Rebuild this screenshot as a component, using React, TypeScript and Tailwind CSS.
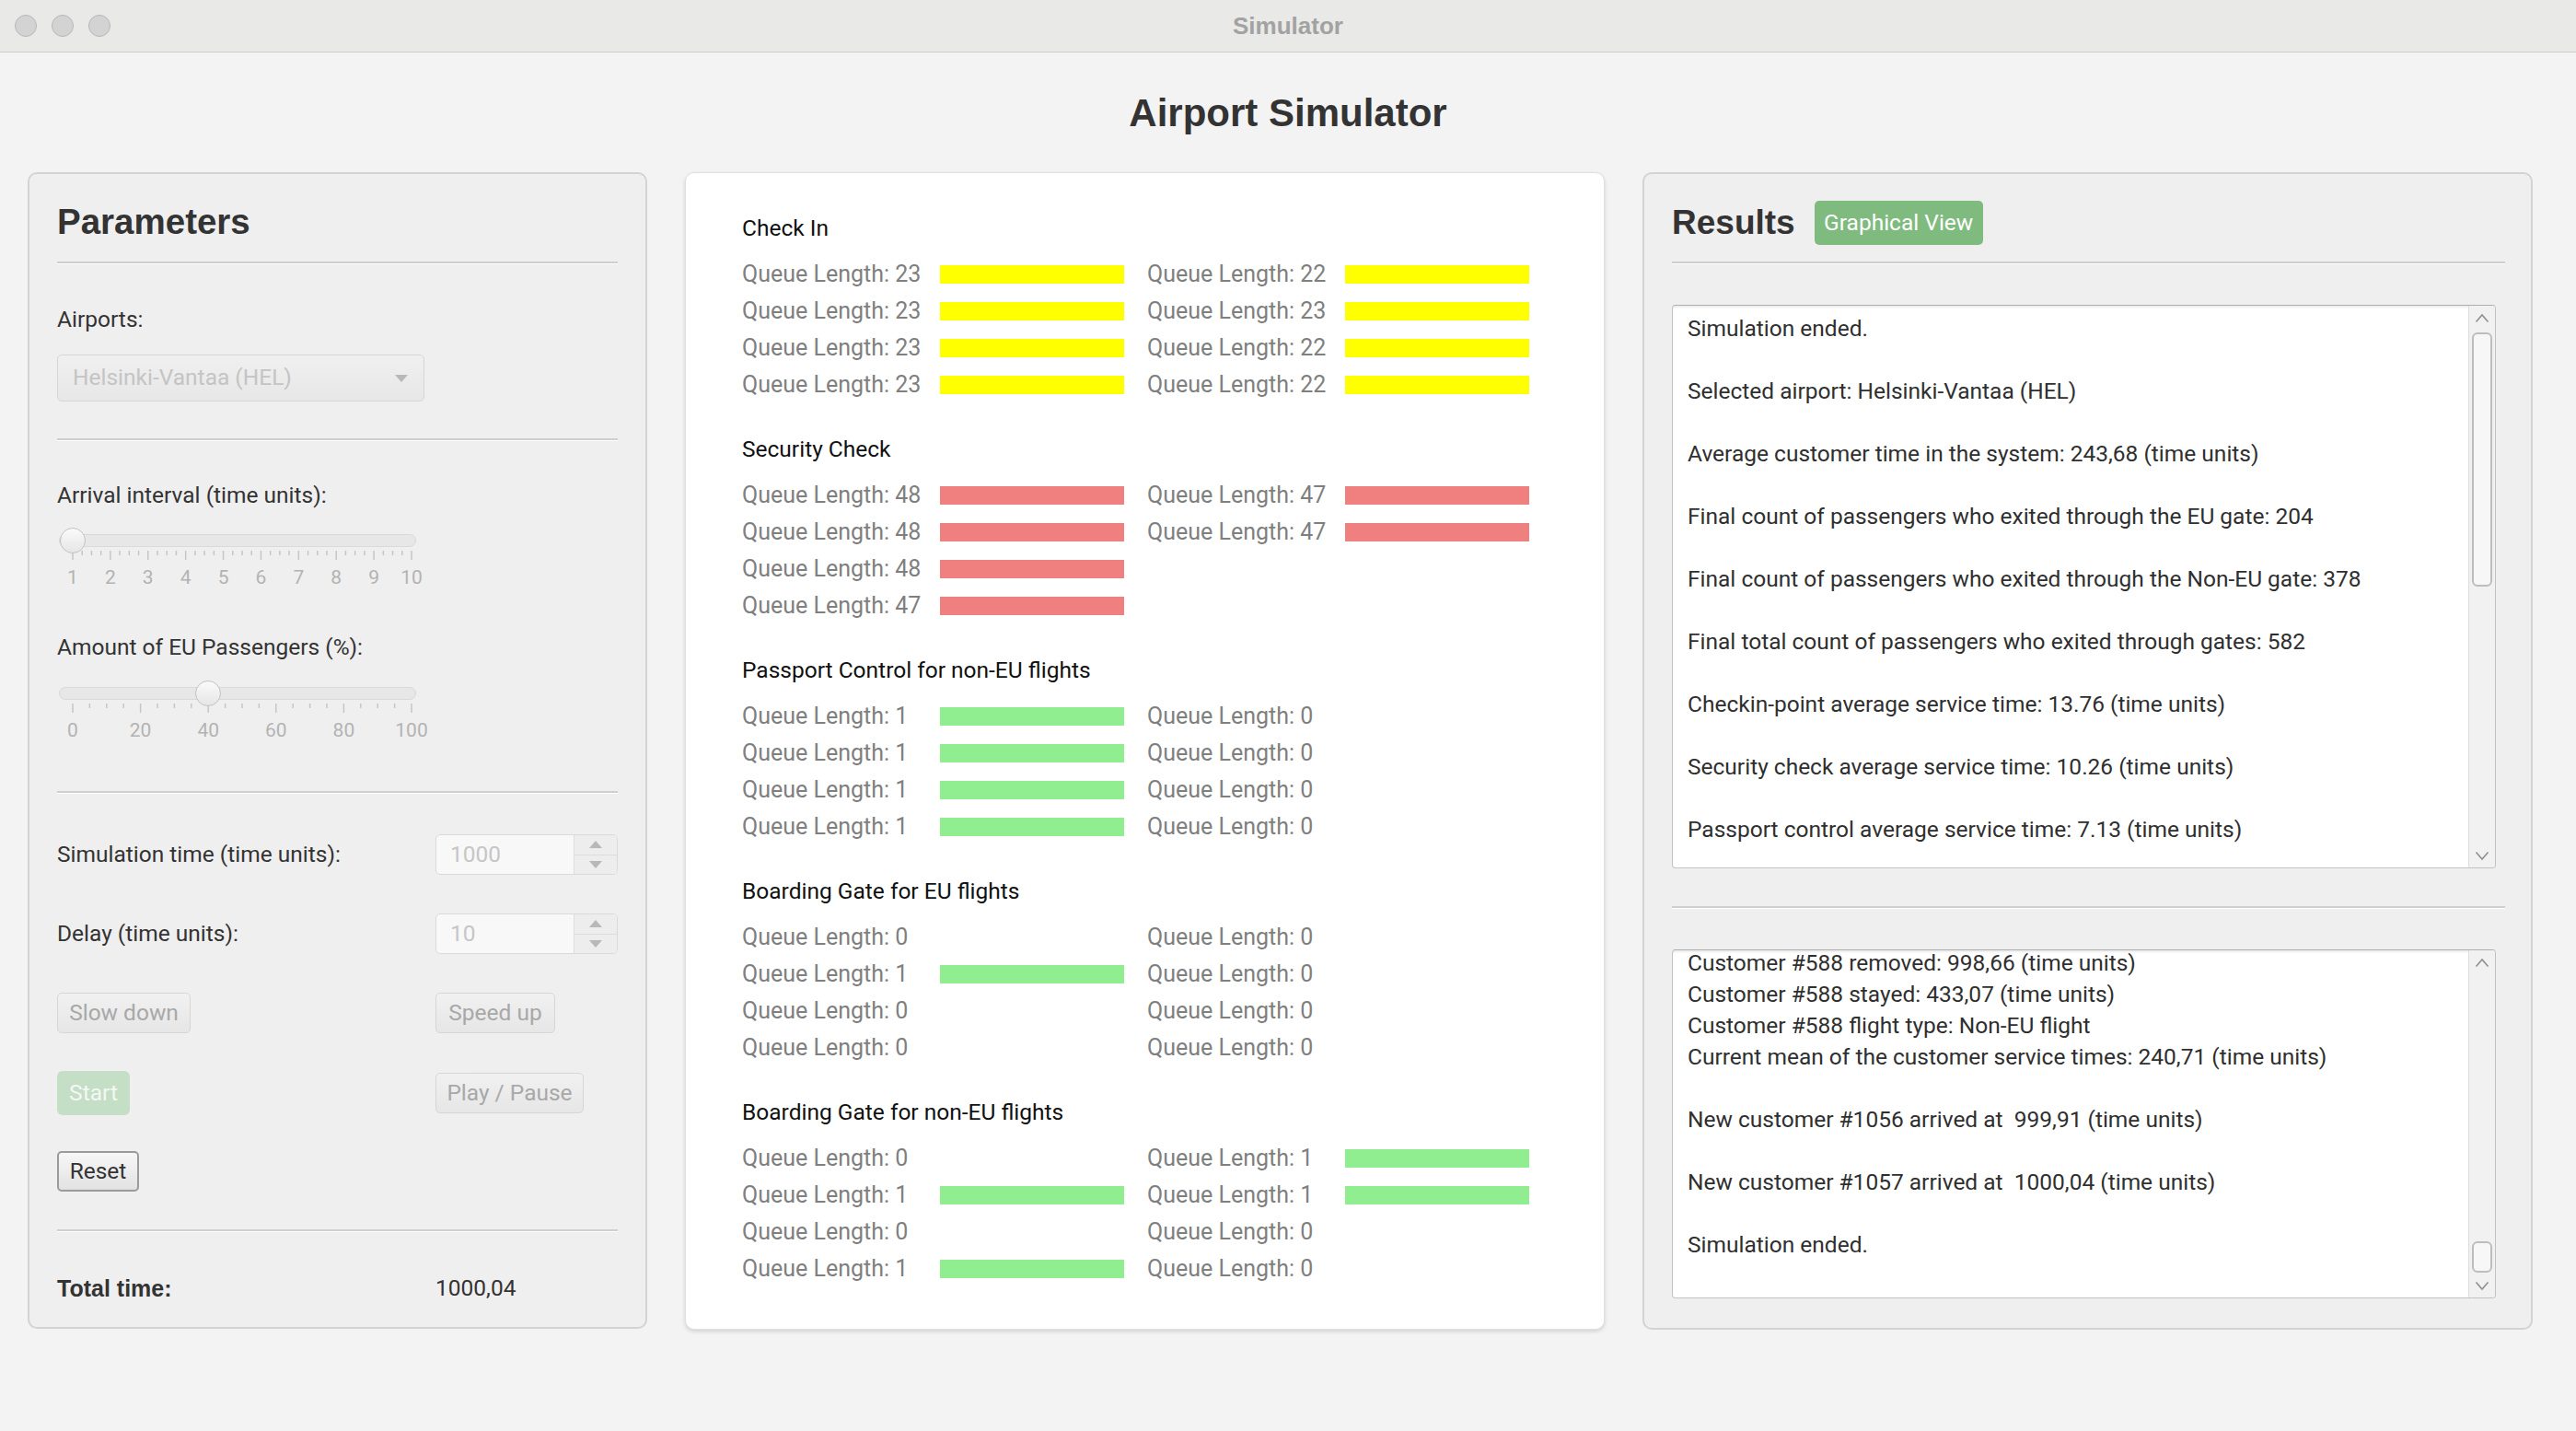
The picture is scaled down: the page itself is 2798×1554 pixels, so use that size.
import React from "react";

type Cell = number | null;
type Section = { title: string; color: string; rows: [Cell, Cell][] };

const SECTIONS: Section[] = [
  { title: "Check In", color: "bg-[#ffff00]", rows: [[23, 22], [23, 23], [23, 22], [23, 22]] },
  { title: "Security Check", color: "bg-[#f08080]", rows: [[48, 47], [48, 47], [48, null], [47, null]] },
  { title: "Passport Control for non-EU flights", color: "bg-[#90ee90]", rows: [[1, 0], [1, 0], [1, 0], [1, 0]] },
  { title: "Boarding Gate for EU flights", color: "bg-[#90ee90]", rows: [[0, 0], [1, 0], [0, 0], [0, 0]] },
  { title: "Boarding Gate for non-EU flights", color: "bg-[#90ee90]", rows: [[0, 1], [1, 1], [0, 0], [1, 0]] },
];

const RESULTS = [
  "Simulation ended.",
  "",
  "Selected airport: Helsinki-Vantaa (HEL)",
  "",
  "Average customer time in the system: 243,68 (time units)",
  "",
  "Final count of passengers who exited through the EU gate: 204",
  "",
  "Final count of passengers who exited through the Non-EU gate: 378",
  "",
  "Final total count of passengers who exited through gates: 582",
  "",
  "Checkin-point average service time: 13.76 (time units)",
  "",
  "Security check average service time: 10.26 (time units)",
  "",
  "Passport control average service time: 7.13 (time units)",
];

const LOG = [
  "Customer #588 removed: 998,66 (time units)",
  "Customer #588 stayed: 433,07 (time units)",
  "Customer #588 flight type: Non-EU flight",
  "Current mean of the customer service times: 240,71 (time units)",
  "",
  "New customer #1056 arrived at  999,91 (time units)",
  "",
  "New customer #1057 arrived at  1000,04 (time units)",
  "",
  "Simulation ended.",
];

function Separator({ className = "" }: { className?: string }) {
  return <div className={`border-t-2 border-t-[#cfcfcf] border-b border-b-white ${className}`} />;
}

function Slider({ labels, value }: { labels: string[]; value: number }) {
  // usable range inside the slider: 15px .. 383px
  const span = 368;
  const majors = labels.length - 1;
  const ticks: { x: number; major: boolean }[] = [];
  for (let i = 0; i <= majors * 4; i++) {
    ticks.push({ x: 15 + (span * i) / (majors * 4), major: i % 4 === 0 });
  }
  return (
    <div className="relative h-[66px] w-[400px] ml-[2px]">
      <div className="absolute left-0 top-[7px] h-[14px] w-[388px] rounded-full bg-[#e7e7e7] border border-[#d9d9d9]" />
      <svg className="absolute left-0 top-[25px]" width="400" height="12">
        {ticks.map((t, i) => (
          <line key={i} x1={t.x} x2={t.x} y1={0} y2={t.major ? 10 : 5} stroke="#c6c6c6" strokeWidth="1.5" />
        ))}
      </svg>
      <div
        className="absolute top-0 h-[28px] w-[28px] -ml-[14px] rounded-full border border-[#c2c2c2] bg-gradient-to-b from-[#fafafa] to-[#e6e6e6]"
        style={{ left: 15 + span * value }}
      />
      {labels.map((l, i) => (
        <span
          key={l}
          className="absolute top-[42px] h-[24px] -translate-x-1/2 text-[21px] leading-[24px] text-[#b3b3b3]"
          style={{ left: 15 + (span * i) / majors }}
        >
          {l}
        </span>
      ))}
    </div>
  );
}

function Triangle({ up }: { up?: boolean }) {
  return (
    <svg width="14" height="8" viewBox="0 0 14 8">
      <polygon points={up ? "0,8 7,0 14,8" : "0,0 14,0 7,8"} fill="#b8b8b8" />
    </svg>
  );
}

function Spinner({ value }: { value: string }) {
  return (
    <div className="flex h-[44px] w-[198px] overflow-hidden rounded-[5px] border border-[#dadada] bg-[#f8f8f8]">
      <div className="flex flex-1 items-center px-[15px] text-[#c6c6c6]">{value}</div>
      <div className="flex w-[47px] flex-col border-l border-[#dedede] bg-[#ededed]">
        <div className="flex flex-1 items-center justify-center border-b border-[#dcdcdc]">
          <Triangle up />
        </div>
        <div className="flex flex-1 items-center justify-center">
          <Triangle />
        </div>
      </div>
    </div>
  );
}

function Chevron({ up }: { up?: boolean }) {
  return (
    <svg width="16" height="11" viewBox="0 0 16 11">
      <polyline
        points={up ? "1.5,9.5 8,2 14.5,9.5" : "1.5,1.5 8,9 14.5,1.5"}
        fill="none"
        stroke="#8e8e8e"
        strokeWidth="1.6"
      />
    </svg>
  );
}

function TextArea({
  lines,
  height,
  padTop,
  thumbTop,
  thumbHeight,
}: {
  lines: string[];
  height: string;
  padTop: string;
  thumbTop: string;
  thumbHeight: string;
}) {
  return (
    <div
      className={`flex w-[895px] overflow-hidden rounded-[4px] border border-[#c2c2c2] border-t-[#aeaeae] bg-white shadow-[inset_0_2px_2px_rgba(0,0,0,0.08)] ${height}`}
    >
      <div className={`flex-1 overflow-hidden pl-[16px] text-[#2f2f2f] ${padTop}`}>
        {lines.map((l, i) => (
          <div key={i} className="h-[34px] whitespace-pre leading-[34px]">
            {l}
          </div>
        ))}
      </div>
      <div className="flex w-[29px] flex-col border-l border-[#dcdcdc] bg-[#f1f1f1]">
        <div className="flex h-[26px] items-center justify-center">
          <Chevron up />
        </div>
        <div className="flex-1 px-[3px]">
          <div className={`rounded-[6px] border-2 border-[#bdbdbd] bg-[#f7f7f7] ${thumbTop} ${thumbHeight}`} />
        </div>
        <div className="flex h-[26px] items-center justify-center">
          <Chevron />
        </div>
      </div>
    </div>
  );
}

function QueueCell({ value, color }: { value: Cell; color: string }) {
  if (value === null)
    return (
      <>
        <div />
        <div />
      </>
    );
  return (
    <>
      <div className="text-[25px] text-[#7f7f7f]">Queue Length: {value}</div>
      <div>{value > 0 && <div className={`h-[20px] w-[200px] ${color}`} />}</div>
    </>
  );
}

export default function App() {
  return (
    <div className="h-[1554px] w-[2798px] overflow-hidden bg-[#f3f3f3] font-['Roboto',sans-serif] text-[24.5px] text-[#333333]">
      {/* title bar */}
      <div className="relative flex h-[57px] items-center justify-center border-b border-[#cbcbcb] bg-[#e9e9e7]">
        <div className="absolute left-[16px] top-[16px] flex gap-[16px]">
          <span className="h-[24px] w-[24px] rounded-full border border-[#b8b8b8] bg-[#d3d3d3]" />
          <span className="h-[24px] w-[24px] rounded-full border border-[#b8b8b8] bg-[#d3d3d3]" />
          <span className="h-[24px] w-[24px] rounded-full border border-[#b8b8b8] bg-[#d3d3d3]" />
        </div>
        <span className="font-['Liberation_Sans',Arial,sans-serif] text-[26px] font-bold text-[#a2a2a2]">Simulator</span>
      </div>

      <div className="flex h-[130px] items-center justify-center">
        <h1 className="font-['Liberation_Sans',Arial,sans-serif] text-[42px] font-bold text-[#333333]">Airport Simulator</h1>
      </div>

      <div className="flex items-start gap-[41px] pl-[30px]">
        {/* ── Parameters ── */}
        <div className="flex h-[1256px] w-[673px] flex-col rounded-[10px] border-2 border-[#d3d3d3] bg-[#efefef] px-[30px] pt-[32px]">
          <div className="flex h-[40px] items-center font-['Liberation_Sans',Arial,sans-serif] text-[38.5px] font-bold text-[#333333]">
            Parameters
          </div>
          <Separator className="mt-[23px]" />
          <div className="mt-[45px] flex h-[30px] items-center">Airports:</div>
          <div className="mt-[23px] flex h-[51px] w-[399px] items-center justify-between rounded-[5px] border border-[#d6d6d6] bg-gradient-to-b from-[#f0f0f0] to-[#e7e7e7] pl-[16px] pr-[17px] text-[#c4c4c4]">
            <span>Helsinki-Vantaa (HEL)</span>
            <Triangle />
          </div>
          <Separator className="mt-[40px]" />
          <div className="mt-[44px] flex h-[30px] items-center">Arrival interval (time units):</div>
          <div className="mt-[20px]">
            <Slider labels={["1", "2", "3", "4", "5", "6", "7", "8", "9", "10"]} value={0} />
          </div>
          <div className="mt-[49px] flex h-[30px] items-center">Amount of EU Passengers (%):</div>
          <div className="mt-[21px]">
            <Slider labels={["0", "20", "40", "60", "80", "100"]} value={0.4} />
          </div>
          <Separator className="mt-[54px]" />

          <div className="mt-[44px] grid h-[44px] grid-cols-[411px_1fr] items-center">
            <span>Simulation time (time units):</span>
            <Spinner value="1000" />
          </div>
          <div className="mt-[42px] grid h-[44px] grid-cols-[411px_1fr] items-center">
            <span>Delay (time units):</span>
            <Spinner value="10" />
          </div>
          <div className="mt-[42px] grid h-[44px] grid-cols-[411px_1fr] items-center">
            <button className="flex h-[44px] w-[145px] items-center justify-center rounded-[5px] border border-[#d6d6d6] bg-gradient-to-b from-[#f1f1f1] to-[#e6e6e6] text-[#a8a8a8]">
              Slow down
            </button>
            <button className="flex h-[44px] w-[130px] items-center justify-center rounded-[5px] border border-[#d6d6d6] bg-gradient-to-b from-[#f1f1f1] to-[#e6e6e6] text-[#a8a8a8]">
              Speed up
            </button>
          </div>
          <div className="mt-[41px] grid h-[48px] grid-cols-[411px_1fr] items-center">
            <button className="flex h-[48px] w-[79px] items-center justify-center rounded-[6px] bg-[#c5dec6] text-[#f3f8f3]">
              Start
            </button>
            <button className="flex h-[44px] w-[161px] items-center justify-center rounded-[5px] border border-[#d6d6d6] bg-gradient-to-b from-[#f1f1f1] to-[#e6e6e6] text-[#a8a8a8]">
              Play / Pause
            </button>
          </div>
          <div className="mt-[39px] flex h-[44px] items-center">
            <button className="flex h-[44px] w-[89px] items-center justify-center rounded-[5px] border-2 border-[#9b9b9b] bg-gradient-to-b from-[#f7f7f7] to-[#e2e2e2] text-[#333333]">
              Reset
            </button>
          </div>
          <Separator className="mt-[41px]" />
          <div className="mt-[43px] grid h-[30px] grid-cols-[411px_1fr] items-center">
            <span className="font-['Liberation_Sans',Arial,sans-serif] text-[25px] font-bold">Total time:</span>
            <span>1000,04</span>
          </div>
        </div>

        {/* ── Queues ── */}
        <div className="h-[1257px] w-[999px] rounded-[10px] border border-[#e0e0e0] bg-white pl-[61px] pt-[45px] shadow-[0_2px_4px_rgba(0,0,0,0.14)]">
          {SECTIONS.map((s, si) => (
            <div key={s.title} className={si > 0 ? "mt-[35px]" : ""}>
              <div className="flex h-[30px] items-center text-[#111111]">{s.title}</div>
              <div className="mt-[15px] grid auto-rows-[40px] grid-cols-[215px_225px_215px_200px] items-center">
                {s.rows.map(([a, b], ri) => (
                  <React.Fragment key={ri}>
                    <QueueCell value={a} color={s.color} />
                    <QueueCell value={b} color={s.color} />
                  </React.Fragment>
                ))}
              </div>
            </div>
          ))}
        </div>

        {/* ── Results ── */}
        <div className="flex h-[1257px] w-[967px] flex-col rounded-[10px] border-2 border-[#d3d3d3] bg-[#efefef] pl-[30px] pr-[28px] pt-[29px]">
          <div className="flex h-[48px] items-center gap-[21px]">
            <span className="font-['Liberation_Sans',Arial,sans-serif] text-[37px] font-bold text-[#333333]">Results</span>
            <button className="flex h-[48px] w-[183px] items-center justify-center rounded-[5px] bg-[#7fba7f] text-white">
              Graphical View
            </button>
          </div>
          <Separator className="mt-[18px]" />
          <div className="mt-[44px]">
            <TextArea lines={RESULTS} height="h-[612px]" padTop="pt-[8px]" thumbTop="mt-[3px]" thumbHeight="h-[276px]" />
          </div>
          <Separator className="mt-[41px]" />
          <div className="mt-[44px]">
            <TextArea lines={LOG} height="h-[379px]" padTop="-mt-[3px]" thumbTop="mt-[290px]" thumbHeight="h-[34px]" />
          </div>
        </div>
      </div>
    </div>
  );
}
